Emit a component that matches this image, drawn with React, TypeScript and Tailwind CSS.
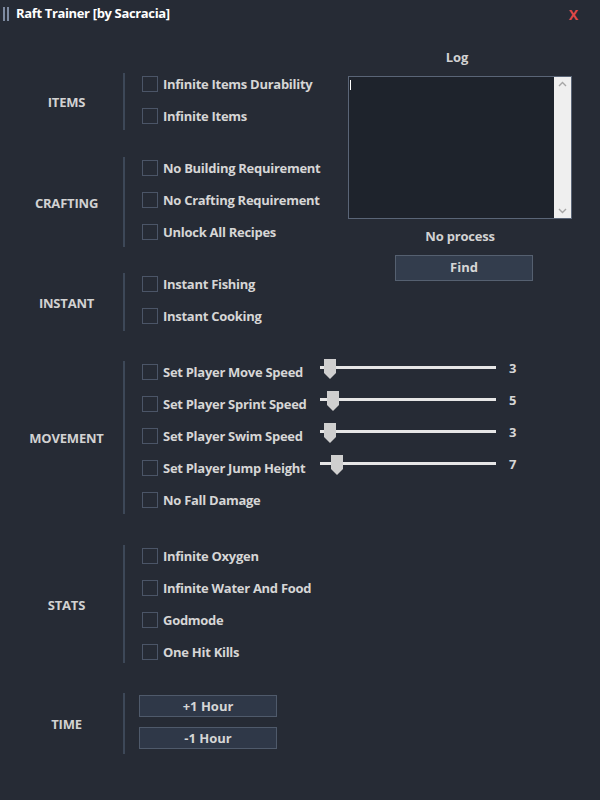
import React from "react";

const font = { fontFamily: '"Open Sans", "Noto Sans", "Liberation Sans", sans-serif' };

const Check = ({ label }: { label: string }) => (
  <div className="flex h-4 items-center">
    <div className="h-4 w-4 shrink-0 border border-[#4b5567]" />
    <span className="ml-[5px] whitespace-nowrap text-[13px] font-bold leading-4 tracking-[-0.28px] text-[#d6d6d6]">
      {label}
    </span>
  </div>
);

const Slider = ({ label, value, pos }: { label: string; value: number; pos: number }) => (
  <div className="flex h-4 items-center">
    <div className="w-[178px]">
      <Check label={label} />
    </div>
    <div className="relative h-4 w-[176px]">
      <div className="absolute left-0 right-0 top-[2px] h-[3px] bg-[#e6e6e6]" />
      <svg className="absolute top-[-5px]" style={{ left: pos }} width="12" height="20" viewBox="0 0 12 20">
        <polygon points="0,0 12,0 12,14 6,20 0,14" fill="#cfcfcf" />
      </svg>
    </div>
    <span className="ml-[13px] -mt-[8px] text-[13px] font-bold leading-4 text-[#d6d6d6]">{value}</span>
  </div>
);

const Group = ({
  title,
  className,
  children,
}: {
  title: string;
  className: string;
  children: React.ReactNode;
}) => (
  <div className="flex">
    <div className="ml-[10px] flex w-[113px] items-center justify-center pt-[3px] text-[13px] font-bold tracking-[-0.2px] text-[#d2d2d2]">
      {title}
    </div>
    <div className={`flex flex-col gap-4 border-l-2 border-[#3d4858] pl-[17px] ${className}`}>{children}</div>
  </div>
);

const HourButton = ({ label }: { label: string }) => (
  <button className="h-[22px] w-[138px] border border-[#4f5a6b] bg-[#2f3848] text-[13px] font-bold leading-none text-[#d6d6d6]">
    {label}
  </button>
);

export default function App() {
  return (
    <div className="h-[800px] w-[600px] overflow-hidden bg-[#262b35]" style={font}>
      {/* title bar */}
      <div className="flex h-[28px] items-center">
        <div className="ml-[3px] flex gap-[2px]">
          <div className="h-[14px] w-[2px] bg-[#7d8aa0]" />
          <div className="h-[14px] w-[2px] bg-[#7d8aa0]" />
        </div>
        <span className="ml-[7px] text-[13px] font-bold tracking-[-0.35px] text-white">Raft Trainer [by Sacracia]</span>
        <span className="ml-auto mr-[22px] text-[14px] font-bold text-[#e04848]">X</span>
      </div>

      {/* top part: groups + log */}
      <div className="flex">
        <div className="flex w-[348px] flex-col pt-[45px]">
          <Group title="ITEMS" className="pt-[3px] pb-[6px]">
            <Check label="Infinite Items Durability" />
            <Check label="Infinite Items" />
          </Group>
          <div className="mt-[27px]">
            <Group title="CRAFTING" className="pt-[3px] pb-[7px]">
              <Check label="No Building Requirement" />
              <Check label="No Crafting Requirement" />
              <Check label="Unlock All Recipes" />
            </Group>
          </div>
          <div className="mt-[26px]">
            <Group title="INSTANT" className="pt-[3px] pb-[7px]">
              <Check label="Instant Fishing" />
              <Check label="Instant Cooking" />
            </Group>
          </div>
        </div>

        <div className="flex w-[224px] flex-col items-center pt-[21px]">
          <div className="pr-[6px] text-[13px] font-bold leading-4 text-[#d2d2d2]">Log</div>
          <div className="mt-[11px] flex h-[143px] w-[224px] border border-[#5a6577] bg-[#1e232c]">
            <div className="flex-1 pl-[1px] pt-[3px]">
              <div className="h-[10px] w-px bg-white" />
            </div>
            <div className="flex w-[17px] flex-col items-center justify-between bg-[#efefef] py-[4px]">
              <svg width="9" height="6" viewBox="0 0 9 6">
                <polyline points="1,5 4.5,1.5 8,5" fill="none" stroke="#a6a6a6" strokeWidth="1.4" />
              </svg>
              <svg width="9" height="6" viewBox="0 0 9 6">
                <polyline points="1,1 4.5,4.5 8,1" fill="none" stroke="#a6a6a6" strokeWidth="1.4" />
              </svg>
            </div>
          </div>
          <div className="mt-[9px] text-[13px] font-bold leading-4 tracking-[-0.2px] text-[#d2d2d2]">No process</div>
          <button className="ml-[8px] mt-[11px] h-[26px] w-[138px] border border-[#556070] bg-[#333d4d] text-[13px] font-bold text-[#d6d6d6]">
            Find
          </button>
        </div>
      </div>

      <div className="mt-[30px]">
        <Group title="MOVEMENT" className="pt-[3px] pb-[6px]">
          <Slider label="Set Player Move Speed" value={3} pos={4} />
          <Slider label="Set Player Sprint Speed" value={5} pos={7} />
          <Slider label="Set Player Swim Speed" value={3} pos={4} />
          <Slider label="Set Player Jump Height" value={7} pos={11} />
          <Check label="No Fall Damage" />
        </Group>
      </div>

      <div className="mt-[31px]">
        <Group title="STATS" className="pt-[3px] pb-[3px]">
          <Check label="Infinite Oxygen" />
          <Check label="Infinite Water And Food" />
          <Check label="Godmode" />
          <Check label="One Hit Kills" />
        </Group>
      </div>

      <div className="mt-[30px]">
        <Group title="TIME" className="!gap-[10px] pt-[2px] pb-[5px] !pl-[14px]">
          <HourButton label="+1 Hour" />
          <HourButton label="-1 Hour" />
        </Group>
      </div>
    </div>
  );
}
